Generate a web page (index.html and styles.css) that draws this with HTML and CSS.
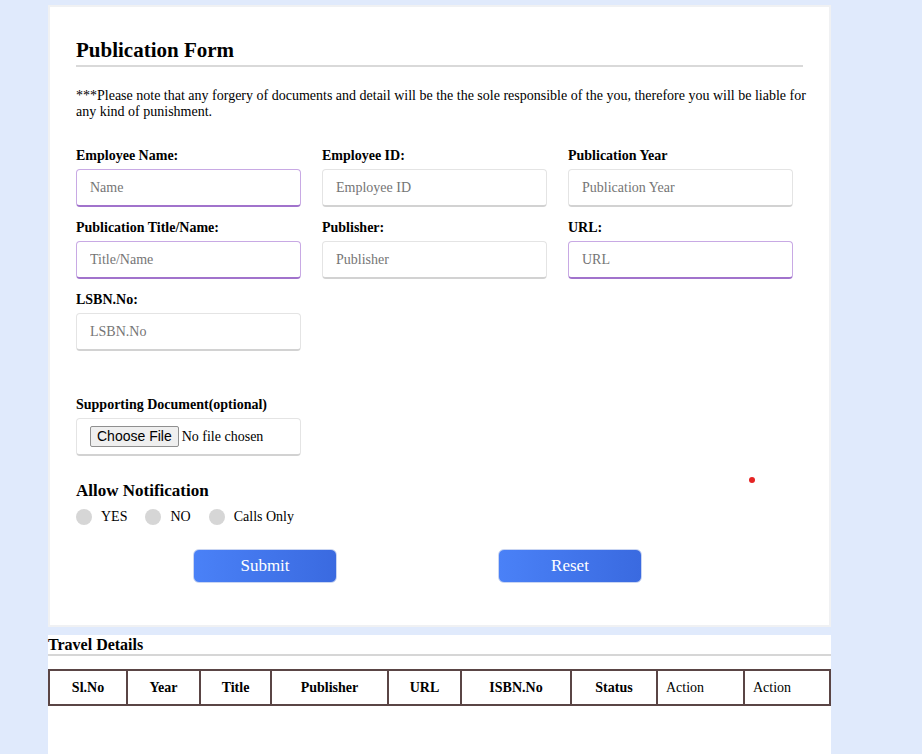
FILE: index.html
```html
<!DOCTYPE html>
<html lang="en">
<head>
<meta charset="utf-8">
<title>Publication Form</title>
<link rel="stylesheet" href="styles.css">
</head>
<body>
<div class="page">
  <div class="card">
    <h2 class="title">Publication Form</h2>
    <p class="note">***Please note that any forgery of documents and detail will be the the sole responsible of the you, therefore you will be liable for any kind of punishment.</p>

    <div class="grid">
      <div class="field">
        <label class="label">Employee Name:</label>
        <input class="input active" type="text" placeholder="Name">
      </div>
      <div class="field">
        <label class="label">Employee ID:</label>
        <input class="input" type="text" placeholder="Employee ID">
      </div>
      <div class="field">
        <label class="label">Publication Year</label>
        <input class="input" type="text" placeholder="Publication Year">
      </div>
      <div class="field">
        <label class="label">Publication Title/Name:</label>
        <input class="input active" type="text" placeholder="Title/Name">
      </div>
      <div class="field">
        <label class="label">Publisher:</label>
        <input class="input" type="text" placeholder="Publisher">
      </div>
      <div class="field">
        <label class="label">URL:</label>
        <input class="input active" type="text" placeholder="URL">
      </div>
      <div class="field">
        <label class="label">LSBN.No:</label>
        <input class="input" type="text" placeholder="LSBN.No">
      </div>
    </div>

    <div class="field upload">
      <label class="label">Supporting Document(optional)</label>
      <div class="input filebox">
        <span class="filebtn">Choose File</span>
        <span class="filetext">No file chosen</span>
      </div>
    </div>

    <h3 class="notify-title">Allow Notification</h3>
    <div class="radios">
      <span class="radio"><span class="circle"></span>YES</span>
      <span class="radio"><span class="circle"></span>NO</span>
      <span class="radio"><span class="circle"></span>Calls Only</span>
    </div>

    <div class="actions">
      <button class="btn" type="button">Submit</button>
      <button class="btn" type="button">Reset</button>
    </div>

    <span class="dot"></span>
  </div>

  <div class="details">
    <h3 class="details-title">Travel Details</h3>
    <table class="table">
      <colgroup>
        <col class="c1"><col class="c2"><col class="c3"><col class="c4"><col class="c5">
        <col class="c6"><col class="c7"><col class="c8"><col class="c9">
      </colgroup>
      <thead>
        <tr>
          <th>Sl.No</th>
          <th>Year</th>
          <th>Title</th>
          <th>Publisher</th>
          <th>URL</th>
          <th>ISBN.No</th>
          <th>Status</th>
          <td>Action</td>
          <td>Action</td>
        </tr>
      </thead>
    </table>
  </div>
</div>
</body>
</html>
```
FILE: styles.css
```css
* { box-sizing: border-box; }

html, body {
  margin: 0;
  padding: 0;
  background: #e0eafc;
  font-family: "Liberation Serif", "Times New Roman", serif;
  color: #000;
  overflow: hidden;
}

.page {
  width: 783px;
  margin-left: 48px;
  padding-top: 5px;
}

.card {
  position: relative;
  background: #fff;
  border: 2px solid #f0f1f3;
  padding: 31px 26px 42px 26px;
}

.title {
  margin: 0;
  font-size: 21px;
  line-height: 24px;
  font-weight: bold;
  padding-bottom: 3px;
  border-bottom: 2px solid #d9d9d9;
}

.note {
  margin: 21px -8px 0 0;
  font-size: 14px;
}

.grid {
  margin-top: 28px;
  display: grid;
  grid-template-columns: 225px 225px 225px;
  column-gap: 21px;
  row-gap: 13px;
}

.field {
  display: flex;
  flex-direction: column;
  width: 225px;
}

.label {
  font-size: 14px;
  line-height: 16px;
  font-weight: bold;
  margin-bottom: 5px;
}

.input {
  width: 225px;
  height: 38px;
  border: 1px solid #e4e4e4;
  border-bottom: 2px solid #d2d2d2;
  border-radius: 4px;
  padding: 0 13px;
  font-family: "Liberation Serif", "Times New Roman", serif;
  font-size: 14px;
  background: #fff;
  outline: none;
}

.input::placeholder { color: #757575; }

.input.active {
  border-color: #c8a9e4;
  border-bottom-color: #a173cc;
}

.upload { margin-top: 46px; }

.filebox {
  display: flex;
  align-items: center;
}

.filebtn {
  display: inline-block;
  height: 21px;
  line-height: 19px;
  padding: 0 6px;
  background: #efefef;
  border: 1px solid #8f8f8f;
  border-radius: 2px;
  font-family: "Liberation Sans", Arial, sans-serif;
  font-size: 14px;
  color: #000;
}

.filetext {
  margin-left: 3px;
  font-size: 14px;
}

.notify-title {
  margin: 25px 0 0;
  font-size: 17px;
  line-height: 20px;
  font-weight: bold;
}

.radios {
  margin-top: 8px;
  display: flex;
  gap: 18px;
  height: 16px;
  align-items: center;
}

.radio {
  display: flex;
  align-items: center;
  font-size: 14px;
  line-height: 16px;
}

.circle {
  display: inline-block;
  width: 16px;
  height: 16px;
  border-radius: 50%;
  background: #d6d6d6;
  margin-right: 9px;
}

.actions {
  margin-top: 24px;
  display: flex;
  gap: 161px;
  padding-left: 117px;
}

.btn {
  width: 144px;
  height: 34px;
  border: 1px solid #c9d5f2;
  border-radius: 6px;
  background: linear-gradient(90deg, #4a81f7 0%, #3a6ae0 100%);
  color: #fff;
  font-family: "Liberation Serif", "Times New Roman", serif;
  font-size: 17px;
  padding: 0;
}

.dot {
  position: absolute;
  left: 699px;
  top: 470px;
  width: 6px;
  height: 6px;
  border-radius: 50%;
  background: #e52424;
}

.details {
  margin-top: 8px;
  background: #fff;
  min-height: 130px;
  padding-top: 1px;
}

.details-title {
  margin: 0;
  font-size: 16px;
  line-height: 18px;
  font-weight: bold;
  border-bottom: 2px solid #d6d6d6;
}

.table {
  margin-top: 13px;
  width: 781px;
  border-collapse: collapse;
  table-layout: fixed;
}

.table th,
.table td {
  border: 2px solid #5a4545;
  height: 35px;
  font-size: 14px;
  padding: 0 8px;
}

.table th {
  font-weight: bold;
  text-align: center;
}

.table td {
  font-weight: normal;
  text-align: left;
}

.c1 { width: 78px; }
.c2 { width: 73px; }
.c3 { width: 71px; }
.c4 { width: 117px; }
.c5 { width: 73px; }
.c6 { width: 110px; }
.c7 { width: 86px; }
.c8 { width: 87px; }
.c9 { width: 86px; }
```
